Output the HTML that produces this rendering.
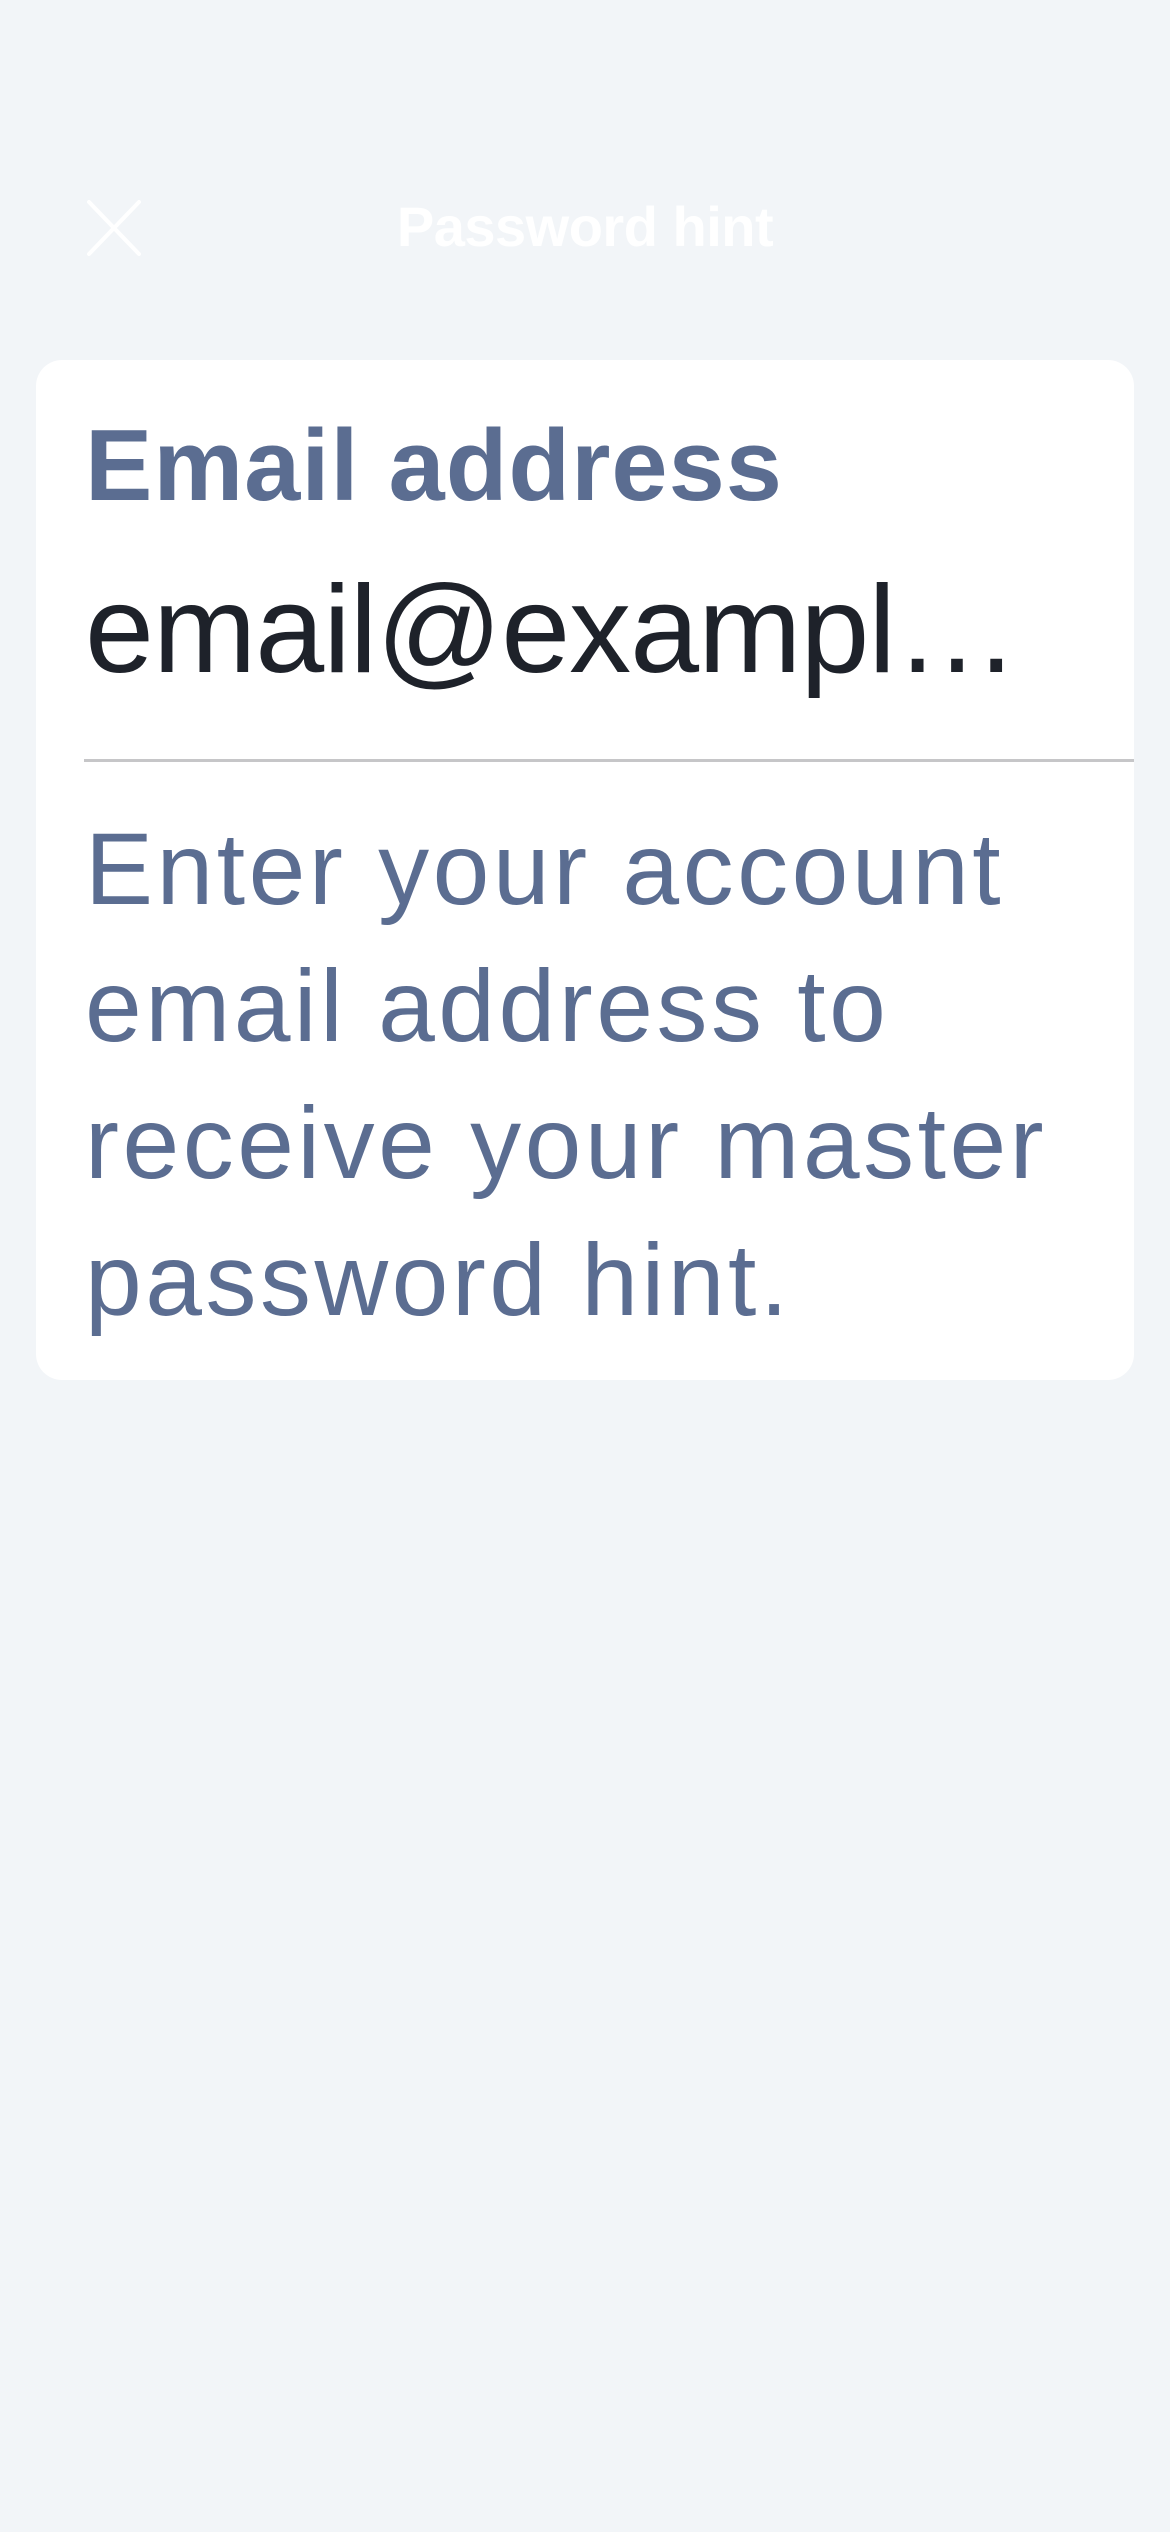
<!DOCTYPE html>
<html><head><meta charset="utf-8"><style>
html,body{margin:0;padding:0;}
body{width:1170px;height:2532px;background:#f2f5f8;position:relative;overflow:hidden;font-family:"Liberation Sans",sans-serif;}
.title{position:absolute;left:0;width:1170px;top:194px;text-align:center;color:#fff;font-weight:bold;font-size:56px;letter-spacing:-0.5px;}
.card{position:absolute;left:36px;top:360px;width:1098px;height:1020px;background:#fff;border-radius:26px;}
.lbl{position:absolute;left:85px;top:409px;font-size:101px;font-weight:bold;color:#5b6d91;letter-spacing:1px;white-space:nowrap;}
.val{position:absolute;left:85px;top:559px;font-size:124px;color:#1e222a;letter-spacing:-1px;white-space:nowrap;}
.div{position:absolute;left:84px;top:759px;width:1050px;height:3px;background:#c6c6c8;}
.desc{position:absolute;left:85px;top:801px;font-size:102px;line-height:137px;color:#5b6d91;letter-spacing:3.5px;white-space:nowrap;}
</style></head><body>
<svg style="position:absolute;left:84px;top:198px" width="60" height="60" viewBox="0 0 60 60"><path d="M5 4 L55 56 M55 4 L5 56" stroke="#fff" stroke-width="4" stroke-linecap="round"/></svg>
<div class="title">Password hint</div>
<div class="card"></div>
<div class="lbl">Email address</div>
<div class="val">email@exampl…</div>
<div class="div"></div>
<div class="desc">Enter your account<br>email address to<br>receive your master<br>password hint.</div>
</body></html>
